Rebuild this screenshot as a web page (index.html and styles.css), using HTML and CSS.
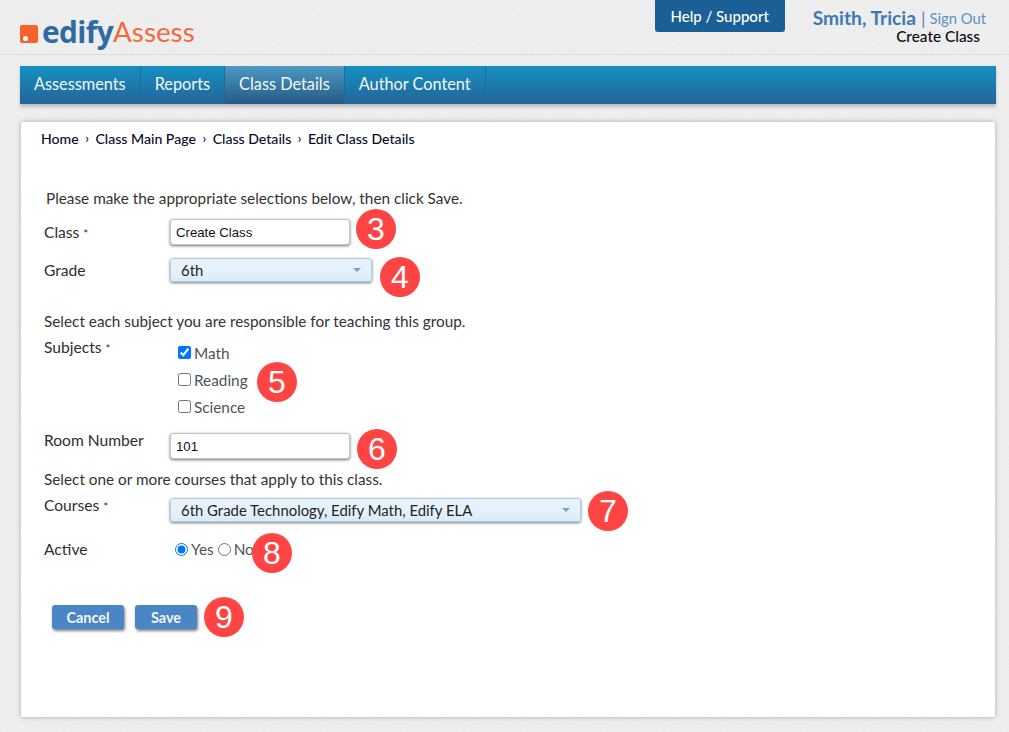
FILE: index.html
```html
<!DOCTYPE html>
<html lang="en">
<head>
<meta charset="utf-8">
<title>Edit Class Details</title>
<link rel="stylesheet" href="styles.css">
</head>
<body>
<header class="header">
  <div class="logo"><span class="logo-mark"><span class="logo-dot"></span></span><span class="logo-edify">edify</span><span class="logo-assess">Assess</span></div>
  <div class="header-right">
    <a class="help">Help / Support</a>
    <div class="user">
      <div class="user-line"><span class="user-name">Smith, Tricia</span><span class="user-sep">|</span><span class="user-out">Sign Out</span></div>
      <div class="user-class">Create Class</div>
    </div>
  </div>
</header>
<nav class="nav">
  <a class="nav-item">Assessments</a>
  <a class="nav-item">Reports</a>
  <a class="nav-item nav-active">Class Details</a>
  <a class="nav-item">Author Content</a>
</nav>
<main class="card">
  <div class="crumbs">
    <span>Home</span><span class="crumb-sep">›</span><span>Class Main Page</span><span class="crumb-sep">›</span><span>Class Details</span><span class="crumb-sep">›</span><span>Edit Class Details</span>
  </div>
  <form class="form">
    <p class="intro">Please make the appropriate selections below, then click Save.</p>
    <div class="row row-class">
      <label class="label">Class <i class="req">*</i></label>
      <div class="input">Create Class</div>
    </div>
    <div class="row row-grade">
      <label class="label">Grade</label>
      <div class="select select-grade"><span>6th</span><span class="caret"></span></div>
    </div>
    <p class="hint hint-subjects">Select each subject you are responsible for teaching this group.</p>
    <div class="row row-subjects">
      <label class="label">Subjects <i class="req">*</i></label>
      <div class="checks">
        <label class="check"><input type="checkbox" checked>Math</label>
        <label class="check"><input type="checkbox">Reading</label>
        <label class="check"><input type="checkbox">Science</label>
      </div>
    </div>
    <div class="row row-room">
      <label class="label">Room Number</label>
      <div class="input">101</div>
    </div>
    <p class="hint hint-courses">Select one or more courses that apply to this class.</p>
    <div class="row row-courses">
      <label class="label">Courses <i class="req">*</i></label>
      <div class="select select-courses"><span>6th Grade Technology, Edify Math, Edify ELA</span><span class="caret"></span></div>
    </div>
    <div class="row row-active">
      <label class="label">Active</label>
      <div class="radios">
        <label class="radio"><input type="radio" name="active" checked>Yes</label>
        <label class="radio"><input type="radio" name="active">No</label>
      </div>
    </div>
    <div class="buttons">
      <a class="btn btn-cancel">Cancel</a>
      <a class="btn btn-save">Save</a>
    </div>
  </form>
  <span class="badge b3">3</span>
  <span class="badge b4">4</span>
  <span class="badge b5">5</span>
  <span class="badge b6">6</span>
  <span class="badge b7">7</span>
  <span class="badge b8">8</span>
  <span class="badge b9">9</span>
</main>
</body>
</html>
```
FILE: styles.css
```css
* { box-sizing: border-box; }
html, body { margin: 0; height: 100%; }
body {
  background-color: #f2f2f2;
  background-image: url("data:image/svg+xml,%3Csvg xmlns='http://www.w3.org/2000/svg' width='200' height='200'%3E%3Cfilter id='n'%3E%3CfeTurbulence type='fractalNoise' baseFrequency='0.9' numOctaves='2'/%3E%3CfeColorMatrix values='0 0 0 0 0.5 0 0 0 0 0.5 0 0 0 0 0.5 0.12 0.12 0.12 0 -0.1'/%3E%3C/filter%3E%3Crect width='200' height='200' filter='url(%23n)'/%3E%3C/svg%3E");
  font-family: "Lato", "Noto Sans", sans-serif;
  font-size: 15.33px;
  color: #333;
  overflow: hidden;
}
.header {
  height: 55px;
  border-bottom: 1px solid #dcdcdc;
  display: flex;
  justify-content: space-between;
  align-items: flex-start;
  padding: 0 23px 0 20px;
}
.logo { display: flex; align-items: center; margin-top: 12px; height: 38px; }
.logo-mark {
  width: 18px; height: 18px; background: #f9612b; border-radius: 2px;
  position: relative; margin-right: 4px; margin-top: 6px;
}
.logo-dot {
  position: absolute; left: 3px; bottom: 2px; width: 5px; height: 5px;
  border-radius: 50%; background: #fff;
}
.logo-edify { font-family: "Open Sans", sans-serif; font-weight: 700; font-size: 29.8px; color: #2f6ba3; letter-spacing: -0.6px; }
.logo-assess { font-family: "Lato", sans-serif; font-size: 27.8px; color: #f26a3d; }
.header-right { display: flex; align-items: flex-start; }
.help {
  width: 130px; height: 32px; background: #1a6096; color: #fff;
  font-size: 15px; font-weight: 500;
  display: flex; align-items: center; justify-content: center;
  border-radius: 0 0 3px 3px; margin-right: 28px;
}
.user { display: flex; flex-direction: column; align-items: flex-end; padding-top: 6px; }
.user-line { display: flex; align-items: center; height: 23px; }
.user-name { font-size: 19.2px; font-weight: 700; color: #3d7ab5; }
.user-sep { color: #5b7fb0; font-size: 18px; margin: 0 4px 0 5px; }
.user-out { color: #5b91c4; font-size: 14.8px; }
.user-class { color: #0a0a14; font-size: 15.4px; font-weight: 500; padding-right: 6px; line-height: 17px; margin-top: -1px; }

.nav {
  margin: 11px 13px 0 20px;
  height: 38px;
  display: flex;
  background: linear-gradient(#1590c2, #246498);
  box-shadow: 0 3px 3px rgba(0,0,0,.2);
}
.nav-item {
  display: flex; align-items: center;
  padding: 0 14px 3px;
  color: #f2f7fa;
  font-size: 16.3px;
  border-right: 1px solid #1b6b9c;
}
.nav-active { background: linear-gradient(#4c9ac2, #245a85); }

.card {
  position: relative;
  margin: 18px 14px 0 21px;
  height: 595px;
  background: #fff;
  box-shadow: 0 0 5px rgba(0,0,0,.3);
  border-radius: 1px;
}
.crumbs {
  padding: 5px 0 0 20px; height: 27px;
  display: flex; align-items: center;
  color: #0a0a28; font-size: 14.1px; font-weight: 500;
}
.crumb-sep { margin: 0 6.5px; font-size: 13px; }
.form { padding-left: 23px; }
.intro { margin: 0; padding: 40px 0 0 2px; line-height: 18px; }
.hint { margin: 0; line-height: 18px; }
.row { display: flex; align-items: flex-start; }
.label { width: 126px; flex: none; line-height: 18px; color: #2e2e2e; font-size: 15.6px; }
.req { font-style: normal; font-size: 12px; color: #7a2020; }
.row-class { margin-top: 12px; height: 26px; }
.row-class .label { padding-top: 4px; }
.input {
  width: 180px; height: 26px; padding: 0 5px;
  display: flex; align-items: center;
  font-family: "Liberation Sans", sans-serif; font-size: 13.2px; color: #111;
  background: #fff; border: 1px solid #c4c4c4; border-radius: 3px;
  box-shadow: 0 1px 3px rgba(0,0,0,.55);
}
.row-grade { margin-top: 13px; height: 24px; }
.row-grade .label { padding-top: 3px; }
.select {
  height: 24px; padding: 0 10px;
  display: flex; align-items: center; justify-content: space-between;
  color: #222; font-size: 14.9px;
  background: linear-gradient(#e6f2fb 0, #e6f2fb 55%, #d9eaf8 100%);
  border: 1px solid #b4cfe2; border-radius: 3px;
  box-shadow: 0 1px 3px rgba(0,0,0,.55);
}
.select-grade { width: 202px; }
.select-courses { width: 411px; }
.caret {
  width: 0; height: 0;
  border-left: 4px solid transparent; border-right: 4px solid transparent;
  border-top: 4px solid #6fa5cf; margin-right: 0;
}
.hint-subjects { margin-top: 30px; }
.row-subjects { margin-top: 8px; height: 81px; }
.checks { display: flex; flex-direction: column; padding-left: 8px; padding-top: 1px; }
.check { display: flex; align-items: center; height: 27px; color: #4a5560; }
.check input, .radio input { margin: 0 3px 0 0; width: 13px; height: 13px; }
.row-room { margin-top: 14px; height: 26px; }
.row-room .label { margin-top: -2px; }
.hint-courses { margin-top: 11px; }
.row-courses { margin-top: 10px; height: 24px; }
.row-courses .label { margin-top: -2px; }
.row-active { margin-top: 17px; height: 20px; }
.row-active .label { padding-top: 1px; }
.radios { display: flex; padding-left: 5px; }
.radio { display: flex; align-items: center; height: 20px; color: #4a5560; margin-right: 4px; }
.buttons { display: flex; gap: 11px; margin-top: 46px; padding-left: 8px; }
.btn {
  height: 24px;
  display: flex; align-items: center; justify-content: center;
  background: #4a86c5; color: #f4f7fb;
  font-size: 14.4px; font-weight: 700;
  border-radius: 3px;
  box-shadow: 1px 2px 3px rgba(0,0,0,.5);
}
.btn-cancel { width: 72px; }
.btn-save { width: 62px; }
.badge {
  position: absolute;
  width: 40px; height: 40px; border-radius: 50%;
  background: #ff4444; color: #fff;
  font-family: "Liberation Sans", sans-serif; font-size: 32px;
  display: flex; align-items: center; justify-content: center;
}
.b3 { left: 335px; top: 87px; }
.b4 { left: 359px; top: 135px; }
.b5 { left: 236px; top: 240px; }
.b6 { left: 336px; top: 307px; }
.b7 { left: 567px; top: 369px; }
.b8 { left: 231px; top: 411px; }
.b9 { left: 183px; top: 475px; }
```
